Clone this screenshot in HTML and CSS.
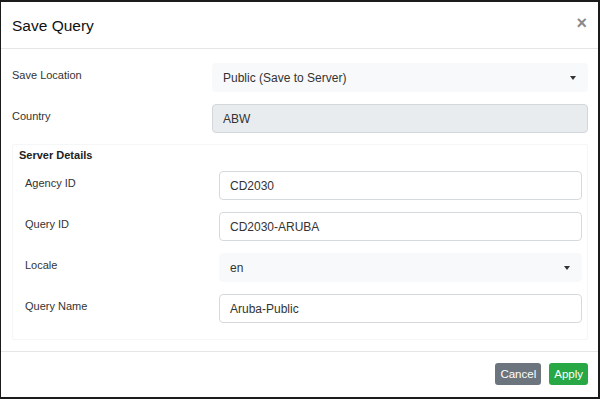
FILE: index.html
```html
<!DOCTYPE html>
<html lang="en">
<head>
  <meta charset="UTF-8" />
  <title>Save Query</title>
  <link rel="stylesheet" href="styles.css">
</head>
<body>
  <div class="modal">
    <div class="modal-header">
      <h5 class="modal-title">Save Query</h5>
      <span class="close">&times;</span>
    </div>

    <div class="modal-body">
      <div class="row">
        <label>Save Location</label>
        <div class="select">Public (Save to Server)<span class="caret"></span></div>
      </div>
      <div class="row">
        <label>Country</label>
        <div class="input disabled">ABW</div>
      </div>

      <div class="fieldset">
        <div class="legend">Server Details</div>
        <div class="row inner">
          <label>Agency ID</label>
          <div class="input">CD2030</div>
        </div>
        <div class="row inner">
          <label>Query ID</label>
          <div class="input">CD2030-ARUBA</div>
        </div>
        <div class="row inner">
          <label>Locale</label>
          <div class="select">en<span class="caret"></span></div>
        </div>
        <div class="row inner">
          <label>Query Name</label>
          <div class="input">Aruba-Public</div>
        </div>
      </div>
    </div>

    <div class="modal-footer">
      <button class="btn btn-cancel">Cancel</button>
      <button class="btn btn-apply">Apply</button>
    </div>
  </div>
</body>
</html>
```

FILE: styles.css
```css
* {
  box-sizing: border-box;
}
body, html {
  margin: 0;
  padding: 0;
  font-family: "Liberation Sans", Arial, sans-serif;
  color: #212529;
  background: #1b1b1b;
}
.modal {
  width: 600px;
  height: 399px;
  border: 2px solid #1b1b1b;
  border-left-width: 1px;
  background: white;
  display: flex;
  flex-direction: column;
}
.modal-header {
  height: 47px;
  border-bottom: 1px solid #e4e6e8;
  display: flex;
  align-items: center;
  justify-content: space-between;
  padding: 2px 11px 0 11px;
}
.modal-title {
  margin: 0;
  font-size: 15.5px;
  font-weight: normal;
  color: #111;
}
.close {
  font-size: 18px;
  font-weight: bold;
  color: #8a8a8a;
  margin-top: -5px;
}
.modal-body {
  flex: 1;
  padding: 14px 10px 0 11px;
}
.row {
  display: grid;
  grid-template-columns: 200px 1fr;
  align-items: center;
  margin-bottom: 12px;
}
.row label {
  font-size: 11px;
  color: #333;
  margin-top: -5px;
}
.input, .select {
  height: 29px;
  border-radius: 4px;
  font-size: 12px;
  color: #333;
  padding: 0 10px;
  display: flex;
  align-items: center;
  border: 1px solid #d6dade;
}
.input.disabled {
  background: #e9ecef;
  border-color: #d3d7db;
}
.select {
  background: #f8f9fa;
  border-color: #f8f9fa;
  justify-content: space-between;
}
.caret {
  width: 0;
  height: 0;
  border-left: 3px solid transparent;
  border-right: 3px solid transparent;
  border-top: 4px solid #333;
  margin-right: 1px;
}
.fieldset {
  border: 1px solid #f5f6f7;
  border-radius: 2px;
  padding: 4px 5px 4px 12px;
  margin-top: -1px;
}
.legend {
  font-size: 11px;
  font-weight: bold;
  color: #222;
  margin-left: -6px;
  margin-bottom: 10px;
}
.row.inner {
  grid-template-columns: 194px 1fr;
}
.modal-footer {
  height: 46px;
  border-top: 1px solid #e4e6e8;
  display: flex;
  justify-content: flex-end;
  align-items: center;
  gap: 8px;
  padding: 0 10px 2px 0;
}
.btn {
  font-family: "Liberation Sans", Arial, sans-serif;
  font-size: 11.5px;
  color: white;
  border: none;
  border-radius: 3px;
  height: 22px;
  padding: 0 5px;
}
.btn-cancel {
  background: #6c757d;
}
.btn-apply {
  background: #28a745;
}
```
